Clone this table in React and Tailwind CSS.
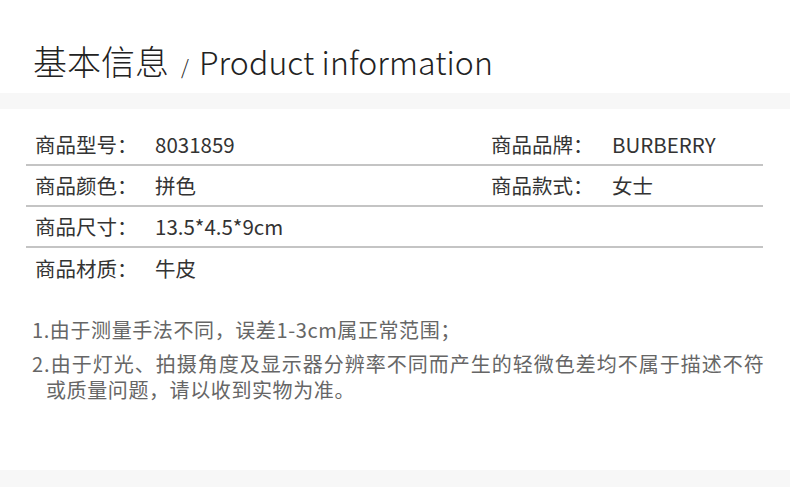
import React from 'react';

const rows = [
  { label: '商品型号：', value: '8031859', label2: '商品品牌：', value2: 'BURBERRY' },
  { label: '商品颜色：', value: '拼色', label2: '商品款式：', value2: '女士' },
  { label: '商品尺寸：', value: '13.5*4.5*9cm' },
  { label: '商品材质：', value: '牛皮' },
];

const App = () => {
  return (
    <div className="w-[790px] h-[487px] bg-white overflow-hidden font-['Noto_Sans_CJK_SC','Noto_Sans',sans-serif]">
      {/* Title */}
      <div className="h-[93px] pl-[33px] pt-[41px] flex items-baseline text-[#222]">
        <span className="text-[34px] leading-[40px] font-light">基本信息</span>
        <span className="text-[20px] font-light ml-[12px] mr-[10px]">/</span>
        <span className="text-[32px] leading-[40px] font-light tracking-[0.1px]">Product information</span>
      </div>
      <div className="h-[16px] bg-[#f7f7f7]" />

      {/* Spec rows */}
      <div className="mt-[16px] ml-[26px] w-[737px] text-[#333] text-[20.5px]">
        {rows.map((row, i) => (
          <div
            key={i}
            className={`flex items-center h-[41px] ${i < 3 ? 'border-b-2 border-[#c4c4c4]' : ''}`}
          >
            <div className="w-[465px] pl-[9px] flex">
              <span className="w-[120px]">{row.label}</span>
              <span>{row.value}</span>
            </div>
            {row.label2 && (
              <div className="flex">
                <span className="w-[121px]">{row.label2}</span>
                <span>{row.value2}</span>
              </div>
            )}
          </div>
        ))}
      </div>

      {/* Notes */}
      <div className="mt-[28px] pl-[32px] text-[#666] text-[20px] tracking-[0.6px] leading-[26px]">
        <p className="mb-[8px]">1.由于测量手法不同，误差1-3cm属正常范围；</p>
        <p className="whitespace-nowrap tracking-[1px]">2.由于灯光、拍摄角度及显示器分辨率不同而产生的轻微色差均不属于描述不符</p>
        <p className="pl-[14px]">或质量问题，请以收到实物为准。</p>
      </div>

      <div className="mt-[67px] h-[18px] bg-[#f7f7f7]" />
    </div>
  );
};

export default App;
